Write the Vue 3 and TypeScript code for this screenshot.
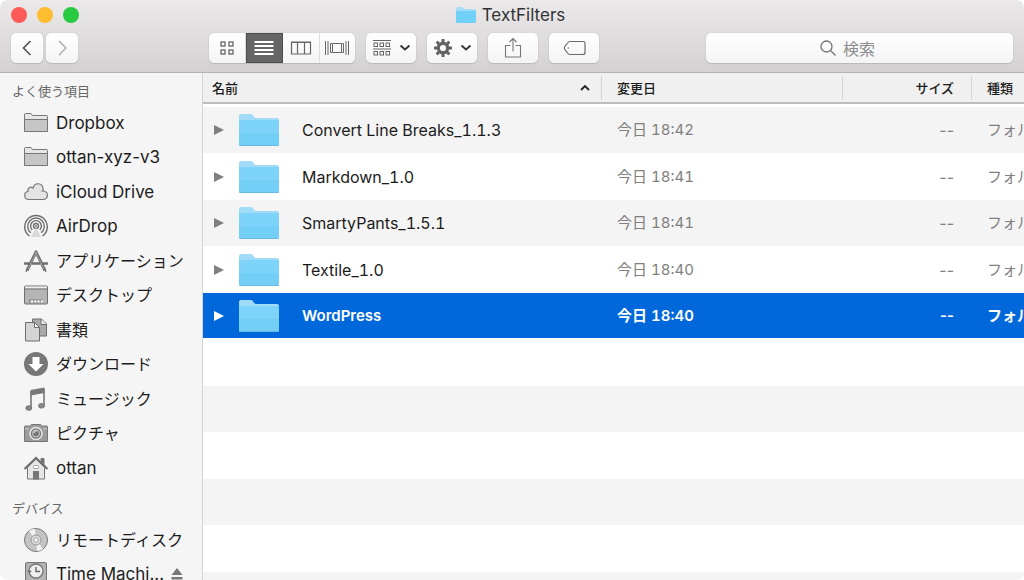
<script setup lang="ts">
import { ref } from 'vue'

interface Place { icon: string; label: string }
interface Folder { name: string; date: string }

const favorites: Place[] = [
  { icon: 'folder', label: 'Dropbox' },
  { icon: 'folder', label: 'ottan-xyz-v3' },
  { icon: 'cloud', label: 'iCloud Drive' },
  { icon: 'airdrop', label: 'AirDrop' },
  { icon: 'apps', label: 'アプリケーション' },
  { icon: 'desktop', label: 'デスクトップ' },
  { icon: 'docs', label: '書類' },
  { icon: 'download', label: 'ダウンロード' },
  { icon: 'music', label: 'ミュージック' },
  { icon: 'camera', label: 'ピクチャ' },
  { icon: 'home', label: 'ottan' },
]
const devices: Place[] = [
  { icon: 'disc', label: 'リモートディスク' },
  { icon: 'backup', label: 'Time Machi...' },
]
const sections = [
  { title: 'よく使う項目', items: favorites },
  { title: 'デバイス', items: devices },
]
const folders: Folder[] = [
  { name: 'Convert Line Breaks_1.1.3', date: '今日 18:42' },
  { name: 'Markdown_1.0', date: '今日 18:41' },
  { name: 'SmartyPants_1.5.1', date: '今日 18:41' },
  { name: 'Textile_1.0', date: '今日 18:40' },
  { name: 'WordPress', date: '今日 18:40' },
]
const views = [
  { id: 'icons', label: 'アイコン表示' },
  { id: 'list', label: 'リスト表示' },
  { id: 'columns', label: 'カラム表示' },
  { id: 'flow', label: 'Cover Flow表示' },
]
const view = ref('list')
const selected = ref('WordPress')
const query = ref('')
const dots = [2, 8, 14]
const teeth = [0, 45, 90, 135, 180, 225, 270, 315]
const isLatin = (text: string): boolean => /^[\x20-\x7e]+$/.test(text)
</script>

<template>
  <div class="window">
    <header class="toolbar">
      <div class="titlebar">
        <div class="lights">
          <button class="light close" aria-label="閉じる"></button>
          <button class="light minimize" aria-label="しまう"></button>
          <button class="light expand" aria-label="拡大"></button>
        </div>
        <h1 class="title">
          <svg width="22" height="18" viewBox="0 0 22 18" aria-hidden="true">
            <path d="M1 2.500Q1 1 2.500 1H7l2 2h10.500Q21 3 21 4.500V7H1Z" fill="#a3dcf7" />
            <path d="M1 5h20v11q0 1-1 1H2q-1 0-1-1Z" fill="#70d0f8" />
          </svg>
          <span>TextFilters</span>
        </h1>
      </div>
      <div class="tools">
        <div class="nav">
          <button class="tool" aria-label="戻る">
            <svg width="16" height="20" viewBox="0 0 16 20"><path d="M11.500 3 4.500 10l7 7" stroke="#505050" stroke-width="1.600" fill="none" /></svg>
          </button>
          <button class="tool" aria-label="進む">
            <svg width="16" height="20" viewBox="0 0 16 20"><path d="m5 3 7 7-7 7" stroke="#aaa" stroke-width="1.400" fill="none" /></svg>
          </button>
        </div>
        <div class="segments" role="group" aria-label="表示">
          <button
            v-for="v in views"
            :key="v.id"
            class="segment"
            :class="{ active: view === v.id }"
            :aria-label="v.label"
            :aria-pressed="view === v.id"
            @click="view = v.id"
          >
            <svg width="26" height="20" viewBox="0 0 26 20" fill="none" stroke="currentColor">
              <template v-if="v.id === 'icons'">
                <g stroke-width="1.300"><rect x="7" y="4" width="4" height="4" /><rect x="15" y="4" width="4" height="4" /><rect x="7" y="12" width="4" height="4" /><rect x="15" y="12" width="4" height="4" /></g>
              </template>
              <path v-else-if="v.id === 'list'" d="M3.500 4h19M3.500 8h19M3.500 12h19M3.500 16h19" stroke-width="2" />
              <path v-else-if="v.id === 'columns'" d="M3.500 4h19v12h-19zM9.500 4v12M16.500 4v12M3.500 4.500h19" stroke-width="1.200" />
              <path v-else d="M1.500 3v14M4 3v14M22 3v14M24.500 3v14M8 5.500H6.500v9H8M18 5.500h1.500v9H18M8.500 5.500h9v9h-9z" stroke-width="1" />
            </svg>
          </button>
        </div>
        <button class="tool menu" aria-label="項目の並び順序">
          <svg width="20" height="20" viewBox="0 0 20 20" fill="none" stroke="#666">
            <path d="M1 2.500h18M1 11h18" stroke-width="1" />
            <g v-for="x in dots" :key="x"><rect :x="x" y="5" width="3.500" height="3.500" /><rect :x="x" y="13.500" width="3.500" height="3.500" /></g>
          </svg>
          <svg width="12" height="10" viewBox="0 0 12 10"><path d="m1.500 2.500 4.500 4 4.500-4" fill="none" stroke="#333" stroke-width="1.800" /></svg>
        </button>
        <button class="tool menu" aria-label="アクション">
          <svg width="20" height="20" viewBox="0 0 20 20">
            <g fill="#636363"><rect v-for="a in teeth" :key="a" x="8.500" y="1" width="3" height="5" rx=".5" :transform="`rotate(${a} 10 10)`" /></g>
            <circle cx="10" cy="10" r="4.700" fill="none" stroke="#636363" stroke-width="3.200" />
          </svg>
          <svg width="12" height="10" viewBox="0 0 12 10"><path d="m1.500 2.500 4.500 4 4.500-4" fill="none" stroke="#333" stroke-width="1.800" /></svg>
        </button>
        <button class="tool wide" aria-label="共有">
          <svg width="20" height="22" viewBox="0 0 20 22" fill="none" stroke="#777" stroke-width="1.100"><path d="M7.500 8.500H2.500v11.500h15V8.500H12.500M10 14.500V2M6.500 5 10 1.500 13.500 5" /></svg>
        </button>
        <button class="tool wide" aria-label="タグ">
          <svg width="24" height="20" viewBox="0 0 24 20" fill="none" stroke="#6a6a6a" stroke-width="1.200"><path d="M8 3.500h13q2 0 2 2v9q0 2-2 2H8q-1.500 0-2.500-1.500L2.500 11q-.5-1 0-2l3-4Q6.500 3.500 8 3.500Z" /><circle cx="6.300" cy="10" r=".8" fill="#6a6a6a" stroke="none" /></svg>
        </button>
        <label class="search">
          <svg width="16" height="16" viewBox="0 0 16 16" fill="none" stroke="#707070" stroke-width="1.300"><circle cx="6.500" cy="6.500" r="5.500" /><path d="m10.500 10.500 5 5" /></svg>
          <input v-model="query" type="text" placeholder="検索" aria-label="検索" />
        </label>
      </div>
    </header>

    <div class="body">
      <nav class="sidebar" aria-label="サイドバー">
        <section v-for="s in sections" :key="s.title">
          <h2>{{ s.title }}</h2>
          <ul>
            <li v-for="p in s.items" :key="p.label">
              <a href="#" :class="{ latin: isLatin(p.label) }">
                <svg class="place" width="24" height="24" viewBox="0 0 24 24" fill="none" stroke="#777" aria-hidden="true">
                  <template v-if="p.icon === 'folder'">
                    <path d="M.5 20.500v-17q0-1 1-1H7l1.500 2h14q1 0 1 1v15z" fill="#e6e6e6" />
                    <path d="M.5 8.500h23v12H.5z" fill="#c6c6c6" />
                  </template>
                  <path v-else-if="p.icon === 'cloud'" d="M5 19.500C-.5 19.500-.5 12 4 11.500 3 8 7 6 9 8c1.500-6 9.500-5.500 10 .5.5 1 0 2-.5 2.500 6.500-.5 6.500 8.500.5 8.500Z" fill="#e4e4e4" stroke-width="1.200" />
                  <template v-else-if="p.icon === 'airdrop'">
                    <g stroke-width="1.400" stroke="#707070"><path d="M5.500 22A11.300 11.300 0 1 1 18.500 22" /><path d="M6.800 18.800A8.300 8.300 0 1 1 17.200 18.800" /><path d="M8.200 15.900A5.400 5.400 0 1 1 15.800 15.900" /><circle cx="12" cy="12" r="2.500" /></g>
                    <path d="m12 13.500-5 9.500h10Z" fill="#d9d9d9" stroke="none" /><circle cx="12" cy="12" r="1" fill="#777" stroke="none" />
                  </template>
                  <g v-else-if="p.icon === 'apps'" stroke="#707070">
                    <path d="M12.500 2 3 21.500M11.500 2 21 21.500" stroke-width="3" /><path d="M12.500 3 4 20M11.500 3 20 20" stroke="#bbb" stroke-width=".7" /><path d="M0 14.500h6M8 14.500h8M18 14.500h6" stroke-width="2.600" /><path d="m3 20-1 3M21 20l1 3" stroke-width="1.200" />
                  </g>
                  <template v-else-if="p.icon === 'desktop'">
                    <rect x=".5" y="3" width="23" height="18" rx="1" fill="#b5b5b5" stroke="#707070" /><path d="M1 4.500h22" stroke="#ededed" stroke-width="2" /><path d="M1 6h22" /><path d="M5 18h14" stroke="#9a9a9a" stroke-width="4" /><path d="M7 18.500h12" stroke="#fff" stroke-width="2" stroke-dasharray="2 1.300" />
                  </template>
                  <g v-else-if="p.icon === 'docs'" fill="#d4d4d4" stroke="#6d6d6d">
                    <path d="M8.500 1h9l5 5v12h-14z" fill="#aaa" /><path d="M17 1v5.500h5.500" fill="#eee" /><path d="M1.500 4.500h9l5 5v13.500h-14z" /><path d="M10.500 4.500v5h5z" fill="#fff" />
                  </g>
                  <template v-else-if="p.icon === 'download'">
                    <circle cx="12" cy="12" r="12" fill="#787878" stroke="none" /><path d="M8.500 5h7v7h4L12 19.500 4.500 12h4z" fill="#fff" stroke="none" />
                  </template>
                  <template v-else-if="p.icon === 'music'">
                    <path d="M7 4v17M20 2v17" stroke="#707070" stroke-width="1.500" /><path d="m6.500 3 14-2.500V6l-14 2.500z" fill="#777" stroke="none" /><ellipse cx="4.800" cy="21" rx="3" ry="2.300" fill="#888" /><ellipse cx="17.500" cy="18.800" rx="3" ry="2.300" fill="#888" />
                  </template>
                  <template v-else-if="p.icon === 'camera'">
                    <path d="M.5 6q0-1 1-1h4L8 3.500h8L18.500 5h4q1 0 1 1v14.500H.5z" fill="#9b9b9b" /><path d="M1 8h4M19 8h4" stroke="#d0d0d0" /><circle cx="12" cy="12.500" r="6" stroke="#e8e8e8" stroke-width="1.500" fill="#777" /><circle cx="12" cy="12.500" r="3.500" stroke="#d5d5d5" /><path d="M10 12q.5-2 2.500-2" stroke="#eee" />
                  </template>
                  <template v-else-if="p.icon === 'home'">
                    <path d="M3.500 11.500 12 3l8.500 8.500V23h-17z" fill="#e6e6e6" /><path d="M17 2.500h3v6l-3-3z" fill="#707070" /><path d="M.5 13 12 2l11.500 11" stroke="#707070" stroke-width="2.300" /><rect x="9.500" y="15.500" width="5" height="7.500" fill="#777" /><rect x="9.500" y="9.500" width="5" height="3" rx="1" fill="#fff" stroke="#999" />
                  </template>
                  <template v-else-if="p.icon === 'disc'">
                    <circle cx="12" cy="12" r="11.500" fill="#c4c4c4" /><path d="M12 12 5 3Q8 .8 11 1ZM12 12l7 9q-3 2-6 2Z" fill="#f1f1f1" stroke="none" /><circle cx="12" cy="12" r="5" fill="#ddd" stroke="#999" /><circle cx="12" cy="12" r="2.200" fill="#fff" stroke="#999" />
                  </template>
                  <template v-else>
                    <rect x="1.500" y=".5" width="21" height="23" rx="1.500" fill="#b4b4b4" /><circle cx="12" cy="9" r="7" fill="#eee" stroke="#777" stroke-width="1.300" /><path d="M12 5v4.500h4" stroke="#666" stroke-width="1.400" /><path d="m3.500 8 1.500 3 3-2z" fill="#666" stroke="none" /><path d="M4 20h16" stroke="#ddd" />
                  </template>
                </svg>
                <span>{{ p.label }}</span>
              </a>
              <button v-if="p.icon === 'backup'" class="eject" aria-label="取り出す">
                <svg width="14" height="14" viewBox="0 0 14 14" fill="#777"><path d="m7 1 5.500 7h-11zM1.500 10h11v2.500h-11z" /></svg>
              </button>
            </li>
          </ul>
        </section>
      </nav>

      <main class="files">
        <table>
          <colgroup><col class="c-name" /><col class="c-date" /><col class="c-size" /><col /></colgroup>
          <thead>
            <tr>
              <th scope="col" aria-sort="ascending">
                <button class="sort"><span>名前</span><svg width="12" height="10" viewBox="0 0 12 10"><path d="m2 7 4-4 4 4" fill="none" stroke="#222" stroke-width="1.800" /></svg></button>
              </th>
              <th scope="col"><button class="sort">変更日</button></th>
              <th scope="col" class="size"><button class="sort">サイズ</button></th>
              <th scope="col"><button class="sort">種類</button></th>
            </tr>
          </thead>
          <tbody>
            <tr v-for="f in folders" :key="f.name" :class="{ selected: selected === f.name }" @click="selected = f.name">
              <td class="name">
                <div class="entry">
                  <button class="disclose" :aria-label="`${f.name}を開く`"><svg width="12" height="12" viewBox="0 0 12 12"><path d="M1 1v10l10-5z" fill="currentColor" /></svg></button>
                  <svg class="folder" width="42" height="34" viewBox="0 0 42 34" aria-hidden="true">
                    <path d="M1 3q0-2 2-2h10q1.500 0 2.500 2t2.500 2h21q2 0 2 2v4H1Z" fill="#a0dcf8" />
                    <path d="M1 7h40v24q0 2-2 2H3q-2 0-2-2Z" fill="#7dd3f9" />
                    <path d="M1 20h40v11q0 2-2 2H3q-2 0-2-2Z" fill="#74cff7" />
                    <path d="M1.500 32.500h39" stroke="#66b9df" />
                  </svg>
                  <span>{{ f.name }}</span>
                </div>
              </td>
              <td>{{ f.date }}</td>
              <td class="size">--</td>
              <td>フォルダ</td>
            </tr>
            <tr v-for="n in 6" :key="n" class="filler" aria-hidden="true"><td colspan="4"></td></tr>
          </tbody>
        </table>
      </main>
    </div>
  </div>
</template>

<style>
body { margin: 0; background: #fff; }
</style>

<style scoped>
* { box-sizing: border-box; }
.window {
  height: 100vh;
  display: flex;
  flex-direction: column;
  overflow: hidden;
  border-radius: 8px;
  background: #fff;
  color: #1c1c1c;
  font: 16px/24px Inter, "Noto Sans CJK JP", sans-serif;
}
button { padding: 0; border: 0; background: none; color: inherit; font: inherit; }
svg { flex: none; display: block; }
h1, h2, ul { margin: 0; padding: 0; font-weight: 400; list-style: none; }
.toolbar {
  flex: none;
  padding-bottom: 9px;
  border-bottom: 1px solid #b3b1b2;
  background: linear-gradient(#ebe9ea, #d3d1d2);
}
.titlebar { display: grid; grid-template-columns: 1fr auto 1fr; align-items: center; height: 30px; margin-bottom: 3px; }
.lights { display: flex; gap: 10px; padding-left: 11px; }
.light { width: 16px; height: 16px; border-radius: 50%; }
.close { background: #fc5b57; }
.minimize { background: #fdbd2e; }
.expand { background: #27ca40; }
.title { display: flex; align-items: center; gap: 5px; padding-right: 4px; font-size: 17px; color: #333; }
.tools { display: flex; align-items: center; gap: 11px; padding: 0 11px; }
.nav { display: flex; gap: 3px; width: 187px; }
.tool, .segments, .search {
  height: 30px;
  border-radius: 5px;
  background: linear-gradient(#fff, #f4f4f4);
  box-shadow: 0 0 1px #999, 0 1px 1px #bbb;
}
.tool { display: flex; align-items: center; justify-content: center; width: 32px; }
.tool.menu { width: 50px; gap: 7px; }
.tool.wide { width: 50px; }
.segments { display: flex; width: 146px; overflow: hidden; }
.segment { flex: 1; display: flex; align-items: center; justify-content: center; color: #666; border-right: 1px solid #ddd; }
.segment:last-child { border-right: 0; }
.segment.active { background: #666; color: #fff; border: 1px solid #4c4c4c; }
.search { display: flex; align-items: center; justify-content: center; gap: 7px; width: 307px; margin-left: auto; padding-right: 24px; }
.search input { field-sizing: content; min-width: 32px; max-width: 240px; padding: 0; border: 0; outline: 0; background: none; font: inherit; color: #333; }
.search input::placeholder { color: #8c8c8c; opacity: 1; }
.body { flex: 1; display: flex; min-height: 0; }
.sidebar { flex: none; width: 203px; overflow: hidden; border-right: 1px solid #d4d4d4; background: #f5f5f5; }
.sidebar h2 { padding: 8px 12px 0; height: 32px; font-size: 13px; line-height: 20px; color: #666; }
.sidebar section + section h2 { margin-top: 5px; }
.sidebar li { display: flex; align-items: center; height: 35px; }
.sidebar li:nth-child(even) { height: 34px; }
.sidebar a { display: flex; align-items: center; gap: 8px; padding-left: 24px; color: inherit; text-decoration: none; white-space: nowrap; }
.sidebar a.latin { font-size: 17px; }
.eject { margin-left: 6px; }
.files { flex: 1; min-width: 0; overflow: hidden; }
table { width: 100%; table-layout: fixed; border-collapse: separate; border-spacing: 0; }
.c-name { width: 399px; }
.c-date { width: 241px; }
.c-size { width: 129px; }
th {
  height: 34px;
  padding: 0 0 5px;
  background: linear-gradient(#f0f0f0 29px, #bebebe 29px, #bebebe 31px, #fff 31px);
  font-size: 13px;
  font-weight: 500;
  overflow: hidden;
}
.sort { display: flex; justify-content: space-between; align-items: center; width: 100%; height: 24px; padding: 0 10px 0 15px; border-right: 1px solid #d4d4d4; white-space: nowrap; }
th:first-child .sort { padding-left: 9px; }
th:last-child .sort { border: 0; padding-right: 0; }
.size .sort { justify-content: flex-end; padding-right: 17px; }
td { height: 46px; padding: 0 0 0 15px; overflow: hidden; color: #808080; white-space: nowrap; font-size: 15px; font-variant-numeric: tabular-nums; }
tr:nth-child(even) td { height: 47px; }
tbody tr:nth-child(odd) { background: #f4f4f4; }
td.size { padding: 0 18px 0 0; text-align: right; font-size: 16px; font-variant-numeric: normal; }
td.name { padding: 0 0 0 10px; color: #1c1c1c; font-size: 16px; }
.entry { display: flex; align-items: center; }
.disclose { width: 12px; color: #808080; }
.folder { margin: 0 22px 0 13px; }
tbody tr.filler:nth-child(even) { background: #fff; }
tbody tr.selected { background: #0068da; box-shadow: inset 0 -1px #fff; }
.selected td, .selected td.name, .selected .disclose { color: #fff; font-size: 15px; font-weight: 600; }
</style>
